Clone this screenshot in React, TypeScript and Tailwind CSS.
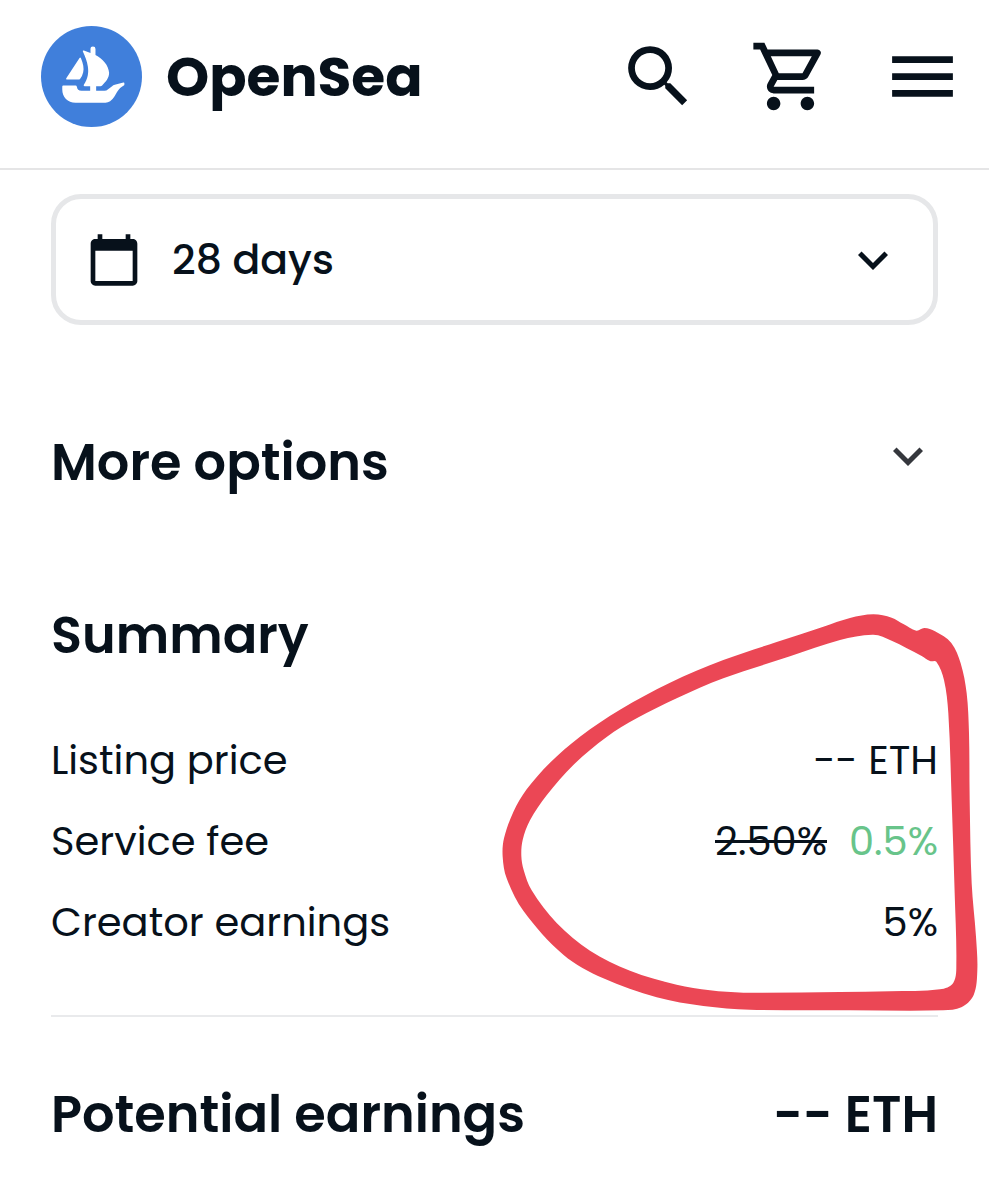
import clsx from "clsx"
import type { ReactNode } from "react"
import {
    MdCalendarToday,
    MdExpandMore,
    MdMenu,
    MdOutlineShoppingCart,
    MdSearch,
} from "react-icons/md"

type Point = [number, number]

interface RowProps {
    label: string
    children: ReactNode
}

const MARKER_OUTER: Point[] = [
    [1150, 43], [1205, 53], [1240, 72], [1279, 92], [1303, 84], [1335, 94], [1384, 129],
    [1412, 190], [1430, 280], [1437, 400], [1439, 600], [1445, 850], [1458, 1010],
    [1462, 1110], [1451, 1185], [1414, 1222], [1360, 1231], [1080, 1231], [780, 1229],
    [640, 1218], [500, 1192], [340, 1135], [220, 1064], [100, 932], [50, 835], [38, 770],
    [42, 715], [70, 636], [110, 568], [180, 488], [270, 410], [390, 329], [540, 248],
    [700, 180], [860, 126], [1000, 80], [1080, 54],
]

const MARKER_INNER: Point[] = [
    [1150, 104], [1205, 122], [1295, 168], [1320, 183], [1339, 185], [1362, 240],
    [1375, 340], [1385, 600], [1394, 880], [1399, 1090], [1390, 1148], [1350, 1168],
    [1200, 1174], [1050, 1176], [760, 1178], [660, 1171], [560, 1154], [420, 1112],
    [300, 1052], [200, 969], [125, 871], [101, 810], [94, 768], [98, 720], [120, 661],
    [170, 586], [250, 495], [350, 411], [440, 355], [560, 295], [700, 235], [900, 169],
    [1050, 120],
]

// Rounds a closed list of points into one smooth outline
function smooth(points: Point[]) {
    const n = points.length
    const dirs = points.map((_, i) => {
        const [ax, ay] = points[(i + n - 1) % n]
        const [bx, by] = points[(i + 1) % n]
        const len = Math.hypot(bx - ax, by - ay)
        return [(bx - ax) / len, (by - ay) / len]
    })
    let d = `M${points[0].join(" ")}`
    for (let i = 0; i < n; i++) {
        const j = (i + 1) % n
        const [x0, y0] = points[i]
        const [x1, y1] = points[j]
        const h = Math.hypot(x1 - x0, y1 - y0) / 3
        d += `C${x0 + dirs[i][0] * h} ${y0 + dirs[i][1] * h}`
        d += ` ${x1 - dirs[j][0] * h} ${y1 - dirs[j][1] * h} ${x1} ${y1}`
    }
    return d + "Z"
}

function Logo() {
    return (
        <svg viewBox="62 46 304 304" className="size-[101px] shrink-0" aria-hidden="true">
            <circle cx="214" cy="198" r="152" fill="#407fdb" />
            <g fill="#fff">
                <path d="M178 142Q180 139 182 142C189 158 192 174 189 185Q187 195 180 205Q179 207 177 207H140Q136 207 138 203Z" />
                <path d="M188 123Q187 119 191 120L211 127V115A7.500 7.500 0 0 1 226 115V133C247 144 266 164 267 187C267 203 257 214 246 225Q244 227 241 227H228V241H253Q259 241 264 236L276 227Q279 224 284 223L310 216Q313 215 313 219V222Q313 225 310 226C297 232 290 247 282 260Q271 277 256 277H166C142 277 126 260 126 237V228Q126 225 129 225H166Q169 225 170 229C171 237 175 241 184 241H210V227H193Q189 227 191 223C203 204 206 188 203 168C201 153 195 138 188 123Z" />
            </g>
        </svg>
    )
}

// Hand drawn loop around the fee values
function Marker() {
    return (
        <svg
            viewBox="36 42 1428 1191"
            className="absolute top-[15px] -right-10 w-[476px] pointer-events-none"
            aria-hidden="true"
        >
            <path
                fill="#eb4755"
                fillRule="evenodd"
                d={smooth(MARKER_OUTER) + smooth(MARKER_INNER)}
            />
        </svg>
    )
}

function SummaryRow({ label, children }: RowProps) {
    return (
        <div className="flex h-[81px] items-center justify-between">
            <dt>{label}</dt>
            <dd className="flex gap-[22px]">{children}</dd>
        </div>
    )
}

export default function App() {
    return (
        <div
            className={clsx([
                "min-h-screen overflow-x-hidden bg-white pb-12",
                "font-[Poppins,Inter,sans-serif] text-[40px] leading-[60px] text-[#07111b]",
            ])}
        >
            <header className="flex items-center justify-between border-b-2 border-[#e5e5e6] pt-[26px] pr-[26px] pb-[41px] pl-[41px]">
                <a href="#" className="flex items-center gap-6 text-[55px] font-bold">
                    <Logo />
                    OpenSea
                </a>
                <nav className="flex gap-[51px]">
                    <button type="button" aria-label="Search">
                        <MdSearch className="size-[81px]" />
                    </button>
                    <button type="button" aria-label="Cart">
                        <MdOutlineShoppingCart className="size-[81px]" />
                    </button>
                    <button type="button" aria-label="Menu">
                        <MdMenu className="size-[81px]" />
                    </button>
                </nav>
            </header>

            <main className="px-[51px] pt-6">
                <div className="flex h-[131px] items-center rounded-[30px] border-[5px] border-[#e6e7e9] px-[30px]">
                    <MdCalendarToday className="size-14 shrink-0" />
                    <select
                        aria-label="Duration"
                        className="ml-[30px] flex-1 appearance-none bg-transparent text-[41px] font-medium"
                    >
                        <option>28 days</option>
                    </select>
                    <MdExpandMore className="size-15 shrink-0 pointer-events-none" />
                </div>

                <button
                    type="button"
                    className="mt-[101px] flex w-full items-start justify-between text-[51px] leading-[72px] font-semibold"
                >
                    More options
                    <MdExpandMore className="size-15 text-[#35373d]" />
                </button>

                <section className="relative mt-[101px]">
                    <h2 className="text-[51px] leading-[72px] font-semibold">Summary</h2>
                    <dl className="mt-12">
                        <SummaryRow label="Listing price">-- ETH</SummaryRow>
                        <SummaryRow label="Service fee">
                            <s className="decoration-3">2.50%</s>
                            <span className="text-[#68c48a]">0.5%</span>
                        </SummaryRow>
                        <SummaryRow label="Creator earnings">5%</SummaryRow>
                    </dl>
                    <Marker />
                </section>

                <div className="mt-[53px] flex justify-between border-t-2 border-[#e9eaec] pt-[61px] text-[51px] leading-[72px] font-semibold">
                    <h2>Potential earnings</h2>
                    <span>-- ETH</span>
                </div>
            </main>
        </div>
    )
}
